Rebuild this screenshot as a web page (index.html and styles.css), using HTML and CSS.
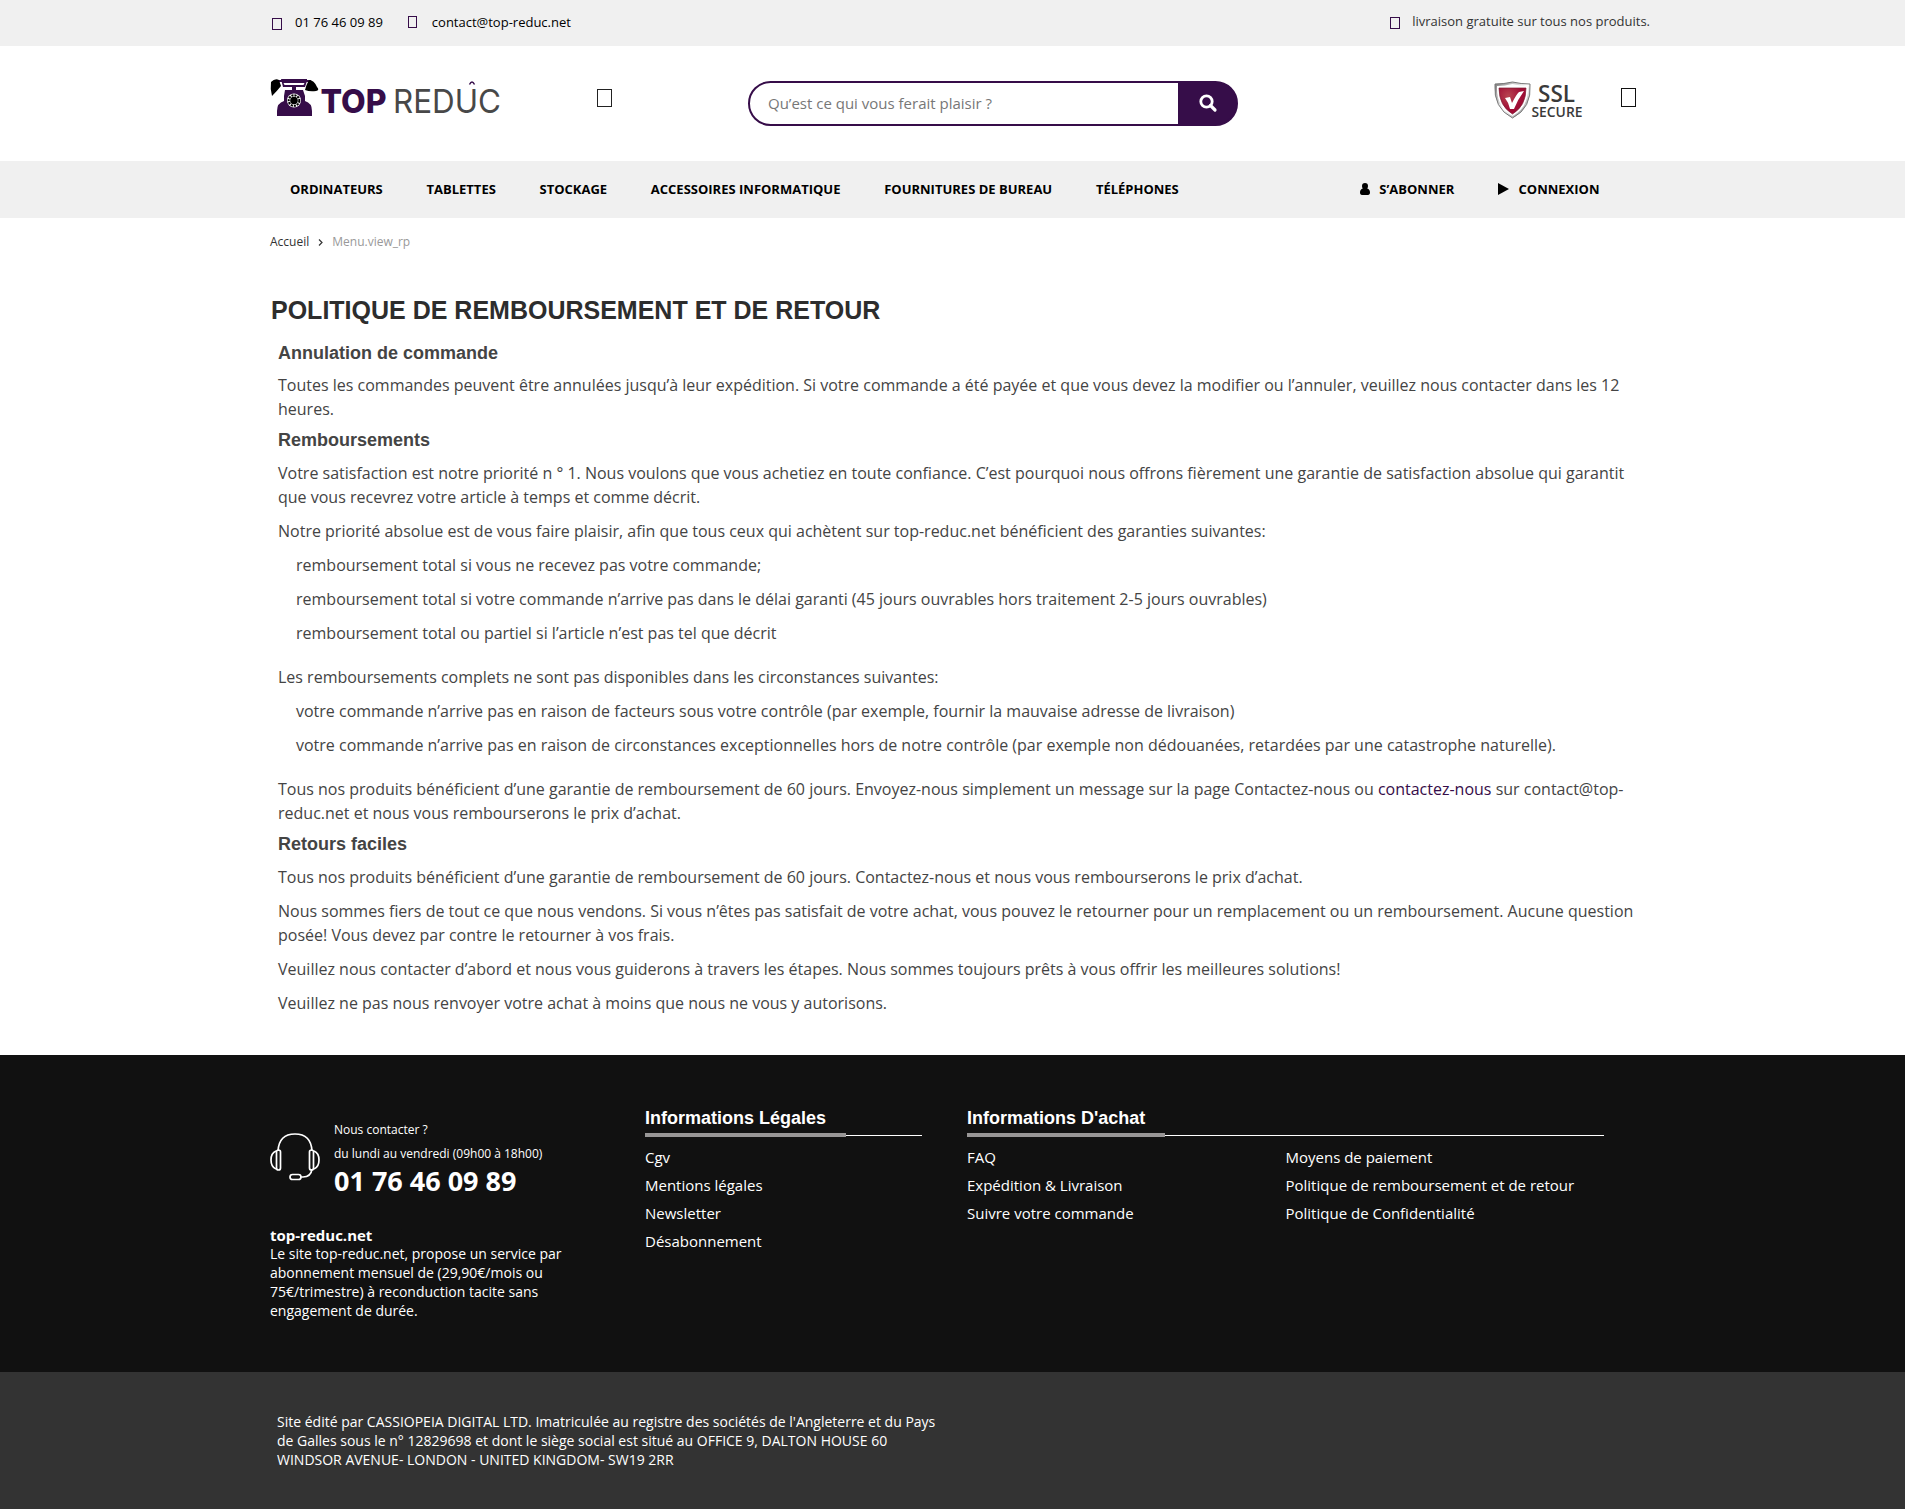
FILE: index.html
```html
<!DOCTYPE html>
<html lang="fr">
<head>
<meta charset="utf-8">
<title>Top Reduc</title>
<link rel="stylesheet" href="styles.css">
</head>
<body>
<div class="topbar">
  <div class="container topbar-row">
    <span class="glyph glyph-phone"></span><span class="phone">01 76 46 09 89</span>
    <span class="glyph glyph-mail"></span><span>contact@top-reduc.net</span>
    <span class="shipping"><span class="glyph glyph-truck"></span>livraison gratuite sur tous nos produits.</span>
  </div>
</div>
<header class="header">
  <div class="container header-row">
    <a class="logo"><svg width="232" height="42" viewBox="0 0 232 42">
      <g fill="#360d49">
        <path d="M11 1h26v2l-2 6H26v3h7l2 6v5q7 2 7 10v5H7v-5q0-8 7-10v-5l1-6h7V9H13z"/>
        <path d="M8 2h33v2H8z"/>
        <rect x="7" y="35" width="34" height="3" rx="1"/>
      </g>
      <path d="M13.500 5h21l-1 2h-19z" fill="#fff"/>
      <path d="M1 4q4-4 8-2l2 6q-4 5-9 10-2-7-1-14zM39 2q5 0 8 7 3 3-1 4-6 1-11-1 1-5 4-10z"/>
      <circle cx="24" cy="22.500" r="7" fill="#fff"/>
      <circle cx="24" cy="22.500" r="5.300" fill="none" stroke="#000" stroke-width="2" stroke-dasharray="2.100 1"/>
      <circle cx="24" cy="22.500" r="3.800"/>
      <text class="logo-top" x="50.500" y="35" textLength="66" lengthAdjust="spacingAndGlyphs">TOP</text>
      <text class="logo-reduc" x="123" y="35" textLength="108" lengthAdjust="spacingAndGlyphs">REDUC</text>
      <path d="M199.500 6.500Q202 1.500 204.500 6.500" fill="none" stroke="#360d49" stroke-width="1.500"/>
    </svg></a>
    <span class="glyph glyph-menu"></span>
    <form class="search">
      <span class="search-input">Qu’est ce qui vous ferait plaisir ?</span>
      <span class="search-button"><svg width="18" height="18" viewBox="0 0 18 18" fill="none" stroke="#fff"><circle cx="7.500" cy="7.500" r="5.700" stroke-width="2.800"/><path d="M11.500 11.500l4.500 4.500" stroke-width="3.200" stroke-linecap="round"/></svg></span>
    </form>
    <svg class="ssl" width="90" height="39" viewBox="0 0 90 39">
      <defs><radialGradient id="red" cx=".35" cy=".3"><stop offset="0" stop-color="#b84450"/><stop offset="1" stop-color="#a00d35"/></radialGradient>
      <linearGradient id="rim" x2="1" y2="1"><stop offset="0" stop-color="#777"/><stop offset=".5" stop-color="#fff"/><stop offset="1" stop-color="#777"/></linearGradient></defs>
      <path d="M1 3q9 0 17.500-2Q27 3 36 3q2 24-17.500 34Q-1 27 1 3z" fill="url(#rim)" stroke="#777" stroke-width="1"/>
      <path d="M3 5q8 0 15.500-2Q26 5 34 5q1 21-15.500 30Q2 26 3 5z" fill="#fff"/>
      <path d="M5 7h27q0 18-13.500 26Q5 25 5 7z" fill="url(#red)" stroke="#7d2035" stroke-width=".7"/>
      <path d="M11 17l5-1 2 6q4-8 7-11l5-1q-6 8-10 18h-4q-1-6-5-11z" fill="#fff"/>
      <text class="ssl-big" x="44" y="20.500" textLength="37" lengthAdjust="spacingAndGlyphs">SSL</text>
      <text class="ssl-small" x="37.500" y="35.500" textLength="51" lengthAdjust="spacingAndGlyphs">SECURE</text>
    </svg>
    <span class="glyph glyph-cart"></span>
  </div>
</header>
<nav class="nav">
  <div class="container nav-row">
    <a>ORDINATEURS</a><a>TABLETTES</a><a>STOCKAGE</a><a>ACCESSOIRES INFORMATIQUE</a><a>FOURNITURES DE BUREAU</a><a>TÉLÉPHONES</a>
    <a class="subscribe"><svg width="10" height="12" viewBox="0 0 10 12"><path d="M5 0c2 0 3 1.300 3 3 0 1-.3 1.900-.8 2.500C9 6 10 7.500 10 9.500 10 11 9.300 12 8 12H2c-1.300 0-2-1-2-2.500C0 7.500 1 6 2.800 5.500 2.300 4.900 2 4 2 3c0-1.700 1-3 3-3z"/></svg>S’ABONNER</a>
    <a class="login"><svg width="11" height="12" viewBox="0 0 11 12"><path d="M0 0l11 6-11 6z"/></svg>CONNEXION</a>
  </div>
</nav>
<main class="container">
  <div class="breadcrumb"><span>Accueil</span><svg width="5" height="7" viewBox="0 0 5 7"><path d="M1 .5l3 3-3 3" fill="none" stroke="#333" stroke-width="1.200"/></svg><span class="current">Menu.view_rp</span></div>
  <h1>POLITIQUE DE REMBOURSEMENT ET DE RETOUR</h1>
  <div class="content">
    <h2>Annulation de commande</h2>
    <p>Toutes les commandes peuvent être annulées jusqu’à leur expédition. Si votre commande a été payée et que vous devez la modifier ou l’annuler, veuillez nous contacter dans les 12 heures.</p>
    <h2>Remboursements</h2>
    <p>Votre satisfaction est notre priorité n ° 1. Nous voulons que vous achetiez en toute confiance. C’est pourquoi nous offrons fièrement une garantie de satisfaction absolue qui garantit que vous recevrez votre article à temps et comme décrit.</p>
    <p>Notre priorité absolue est de vous faire plaisir, afin que tous ceux qui achètent sur top-reduc.net bénéficient des garanties suivantes:</p>
    <ul>
      <li>remboursement total si vous ne recevez pas votre commande;</li>
      <li>remboursement total si votre commande n’arrive pas dans le délai garanti (45 jours ouvrables hors traitement 2-5 jours ouvrables)</li>
      <li>remboursement total ou partiel si l’article n’est pas tel que décrit</li>
    </ul>
    <p>Les remboursements complets ne sont pas disponibles dans les circonstances suivantes:</p>
    <ul>
      <li>votre commande n’arrive pas en raison de facteurs sous votre contrôle (par exemple, fournir la mauvaise adresse de livraison)</li>
      <li>votre commande n’arrive pas en raison de circonstances exceptionnelles hors de notre contrôle (par exemple non dédouanées, retardées par une catastrophe naturelle).</li>
    </ul>
    <p>Tous nos produits bénéficient d’une garantie de remboursement de 60 jours. Envoyez-nous simplement un message sur la page Contactez-nous ou <a class="link">contactez-nous</a> sur contact@top-reduc.net et nous vous rembourserons le prix d’achat.</p>
    <h2>Retours faciles</h2>
    <p>Tous nos produits bénéficient d’une garantie de remboursement de 60 jours. Contactez-nous et nous vous rembourserons le prix d’achat.</p>
    <p>Nous sommes fiers de tout ce que nous vendons. Si vous n’êtes pas satisfait de votre achat, vous pouvez le retourner pour un remplacement ou un remboursement. Aucune question posée! Vous devez par contre le retourner à vos frais.</p>
    <p>Veuillez nous contacter d’abord et nous vous guiderons à travers les étapes. Nous sommes toujours prêts à vous offrir les meilleures solutions!</p>
    <p>Veuillez ne pas nous renvoyer votre achat à moins que nous ne vous y autorisons.</p>
  </div>
</main>
<footer class="footer">
  <div class="container footer-row">
    <section class="contact">
      <div class="contact-head">
        <svg width="50" height="50" viewBox="0 0 50 50" fill="none" stroke="#fff" stroke-width="1.700">
          <path d="M8 19Q9 2 25 2t17 17M42 37q-1 8-9 8h-3"/>
          <rect x="6.500" y="18" width="4" height="20" rx="2"/><rect x="39.500" y="18" width="4" height="20" rx="2"/>
          <path d="M6 19q-5 2-5 9t5 9M44 19q5 2 5 9t-5 9"/><rect x="20" y="42.500" width="11" height="5" rx="2.500"/>
        </svg>
        <div class="contact-text"><div>Nous contacter ?</div><div>du lundi au vendredi (09h00 à 18h00)</div><strong>01 76 46 09 89</strong></div>
      </div>
      <h4>top-reduc.net</h4>
      <p class="about">Le site top-reduc.net, propose un service par abonnement mensuel de (29,90€/mois ou 75€/trimestre) à reconduction tacite sans engagement de durée.</p>
    </section>
    <section class="legal">
      <h3>Informations Légales</h3>
      <div class="rule"><i></i></div>
      <div class="links"><a>Cgv</a><a>Mentions légales</a><a>Newsletter</a><a>Désabonnement</a></div>
    </section>
    <section class="purchase">
      <h3>Informations D'achat</h3>
      <div class="rule"><i></i></div>
      <div class="columns">
        <div class="links"><a>FAQ</a><a>Expédition &amp; Livraison</a><a>Suivre votre commande</a></div>
        <div class="links"><a>Moyens de paiement</a><a>Politique de remboursement et de retour</a><a>Politique de Confidentialité</a></div>
      </div>
    </section>
  </div>
</footer>
<div class="bottom">
  <div class="container"><p class="company">Site édité par CASSIOPEIA DIGITAL LTD. Imatriculée au registre des sociétés de l'Angleterre et du Pays de Galles sous le n° 12829698 et dont le siège social est situé au OFFICE 9, DALTON HOUSE 60 WINDSOR AVENUE- LONDON - UNITED KINGDOM- SW19 2RR</p></div>
</div>
</body>
</html>
```
FILE: styles.css
```css
* { box-sizing: border-box; }
body { margin: 0; background: #fff; color: #444; font: 16px/24px "Open Sans", sans-serif; }
h1, h2, h3, h4, p, ul { margin: 0; padding: 0; }
h1, h2, h3 { font-family: "Liberation Sans", Arial, sans-serif; font-weight: 700; }
svg { display: block; flex: none; overflow: visible; }
.container { width: 1380px; margin-left: 270px; }

.glyph { display: inline-block; flex: none; border: 1px solid #360d49; }
.topbar { height: 46px; background: #f0f0f0; font-size: 13px; line-height: 44px; color: #000; }
.topbar-row { display: flex; align-items: flex-start; }
.glyph-phone { width: 10px; height: 12px; margin: 18px 13px 0 2px; }
.glyph-mail { width: 9px; height: 12px; margin: 16px 15px 0 25px; }
.glyph-truck { width: 10px; height: 12px; margin: 17px 12px 0 0; }
.shipping { display: flex; margin-left: auto; color: #333; line-height: 43px; }

.header { height: 115px; }
.header-row { display: flex; align-items: flex-start; }
.logo { margin-top: 32px; }
.logo-top { font: 800 33px Inter, sans-serif; fill: #360d49; }
.logo-reduc { font: 400 33px Inter, sans-serif; fill: #484848; }
.glyph-menu { width: 15px; height: 18px; margin: 43px 0 0 95px; border-color: #222; }
.search { display: flex; width: 490px; height: 45px; margin: 35px 0 0 136px; border: 2px solid #360d49; border-radius: 23px; background: linear-gradient(#360d49, #360d49) right / 58px 100% no-repeat; }
.search-input { flex: 1; padding-left: 18px; font-size: 15px; line-height: 41px; color: #777; }
.search-button { display: flex; width: 58px; padding: 11px 0 0 21px; }
.ssl { margin: 35px 0 0 256px; }
.ssl-big { font: 600 23.500px "Open Sans", sans-serif; fill: #3a3a3a; }
.ssl-small { font: 600 14.500px "Open Sans", sans-serif; fill: #3a3a3a; }
.glyph-cart { width: 15px; height: 19px; margin: 42px 0 0 37px; border-color: #111; }

.nav { height: 57px; background: #f0f0f0; }
.nav-row { display: flex; gap: 43.700px; padding: 0 50.500px 0 20px; font-size: 13px; font-weight: 700; line-height: 57px; color: #000; white-space: nowrap; }
.nav-row svg { display: inline-block; margin-right: 9.500px; vertical-align: -1px; }
.subscribe { margin-left: auto; }

.breadcrumb { display: flex; align-items: center; height: 48px; font-size: 12px; color: #333; }
.breadcrumb svg { margin: 1px 9px 0; }
.current { color: #999; }
h1 { margin-top: 29px; padding-left: 1px; font-size: 25px; line-height: 30px; color: #2d2d2d; }
.content { width: 1362px; margin: 18px 0 0 8px; }
h2 { margin-bottom: 10px; font-size: 18px; line-height: 20px; }
.content p, li { margin-bottom: 10px; }
.content p + h2 { margin: -1px 0 11px; }
ul { list-style: none; padding: 0 0 10px 18px; }
.link { color: #360d49; }

.footer { height: 317px; margin-top: 40px; background: #111; color: #fff; }
.footer-row { display: flex; }
.contact { width: 375px; padding-top: 63px; }
.contact-head { display: flex; height: 107px; }
.contact-head svg { margin-top: 14px; }
.contact-text { margin-left: 14px; font-size: 12px; }
.contact-text strong { display: block; margin-top: -1px; font-size: 27px; line-height: 32px; }
h4 { font-size: 15px; line-height: 21px; }
.about { width: 310px; font-size: 14px; line-height: 19px; margin-top: -2px; }
.legal { width: 277px; margin-right: 45px; padding-top: 52px; }
.purchase { width: 637px; padding-top: 52px; }
h3 { font-size: 18px; line-height: 22px; }
.rule { height: 4px; margin: 4px 0 6px; background: linear-gradient(#fff, #fff) 0 2px / 100% 1px no-repeat; }
.rule i { display: block; width: 201px; height: 4px; background: #989696; }
.purchase .rule i { width: 198px; }
.columns { display: grid; grid-template-columns: 1fr 1fr; }
.links { display: flex; flex-direction: column; font-size: 15px; line-height: 28px; }

.bottom { height: 137px; padding-top: 40px; background: #333; color: #fff; }
.company { width: 670px; margin-left: 7px; font-size: 14px; line-height: 19px; }
```
